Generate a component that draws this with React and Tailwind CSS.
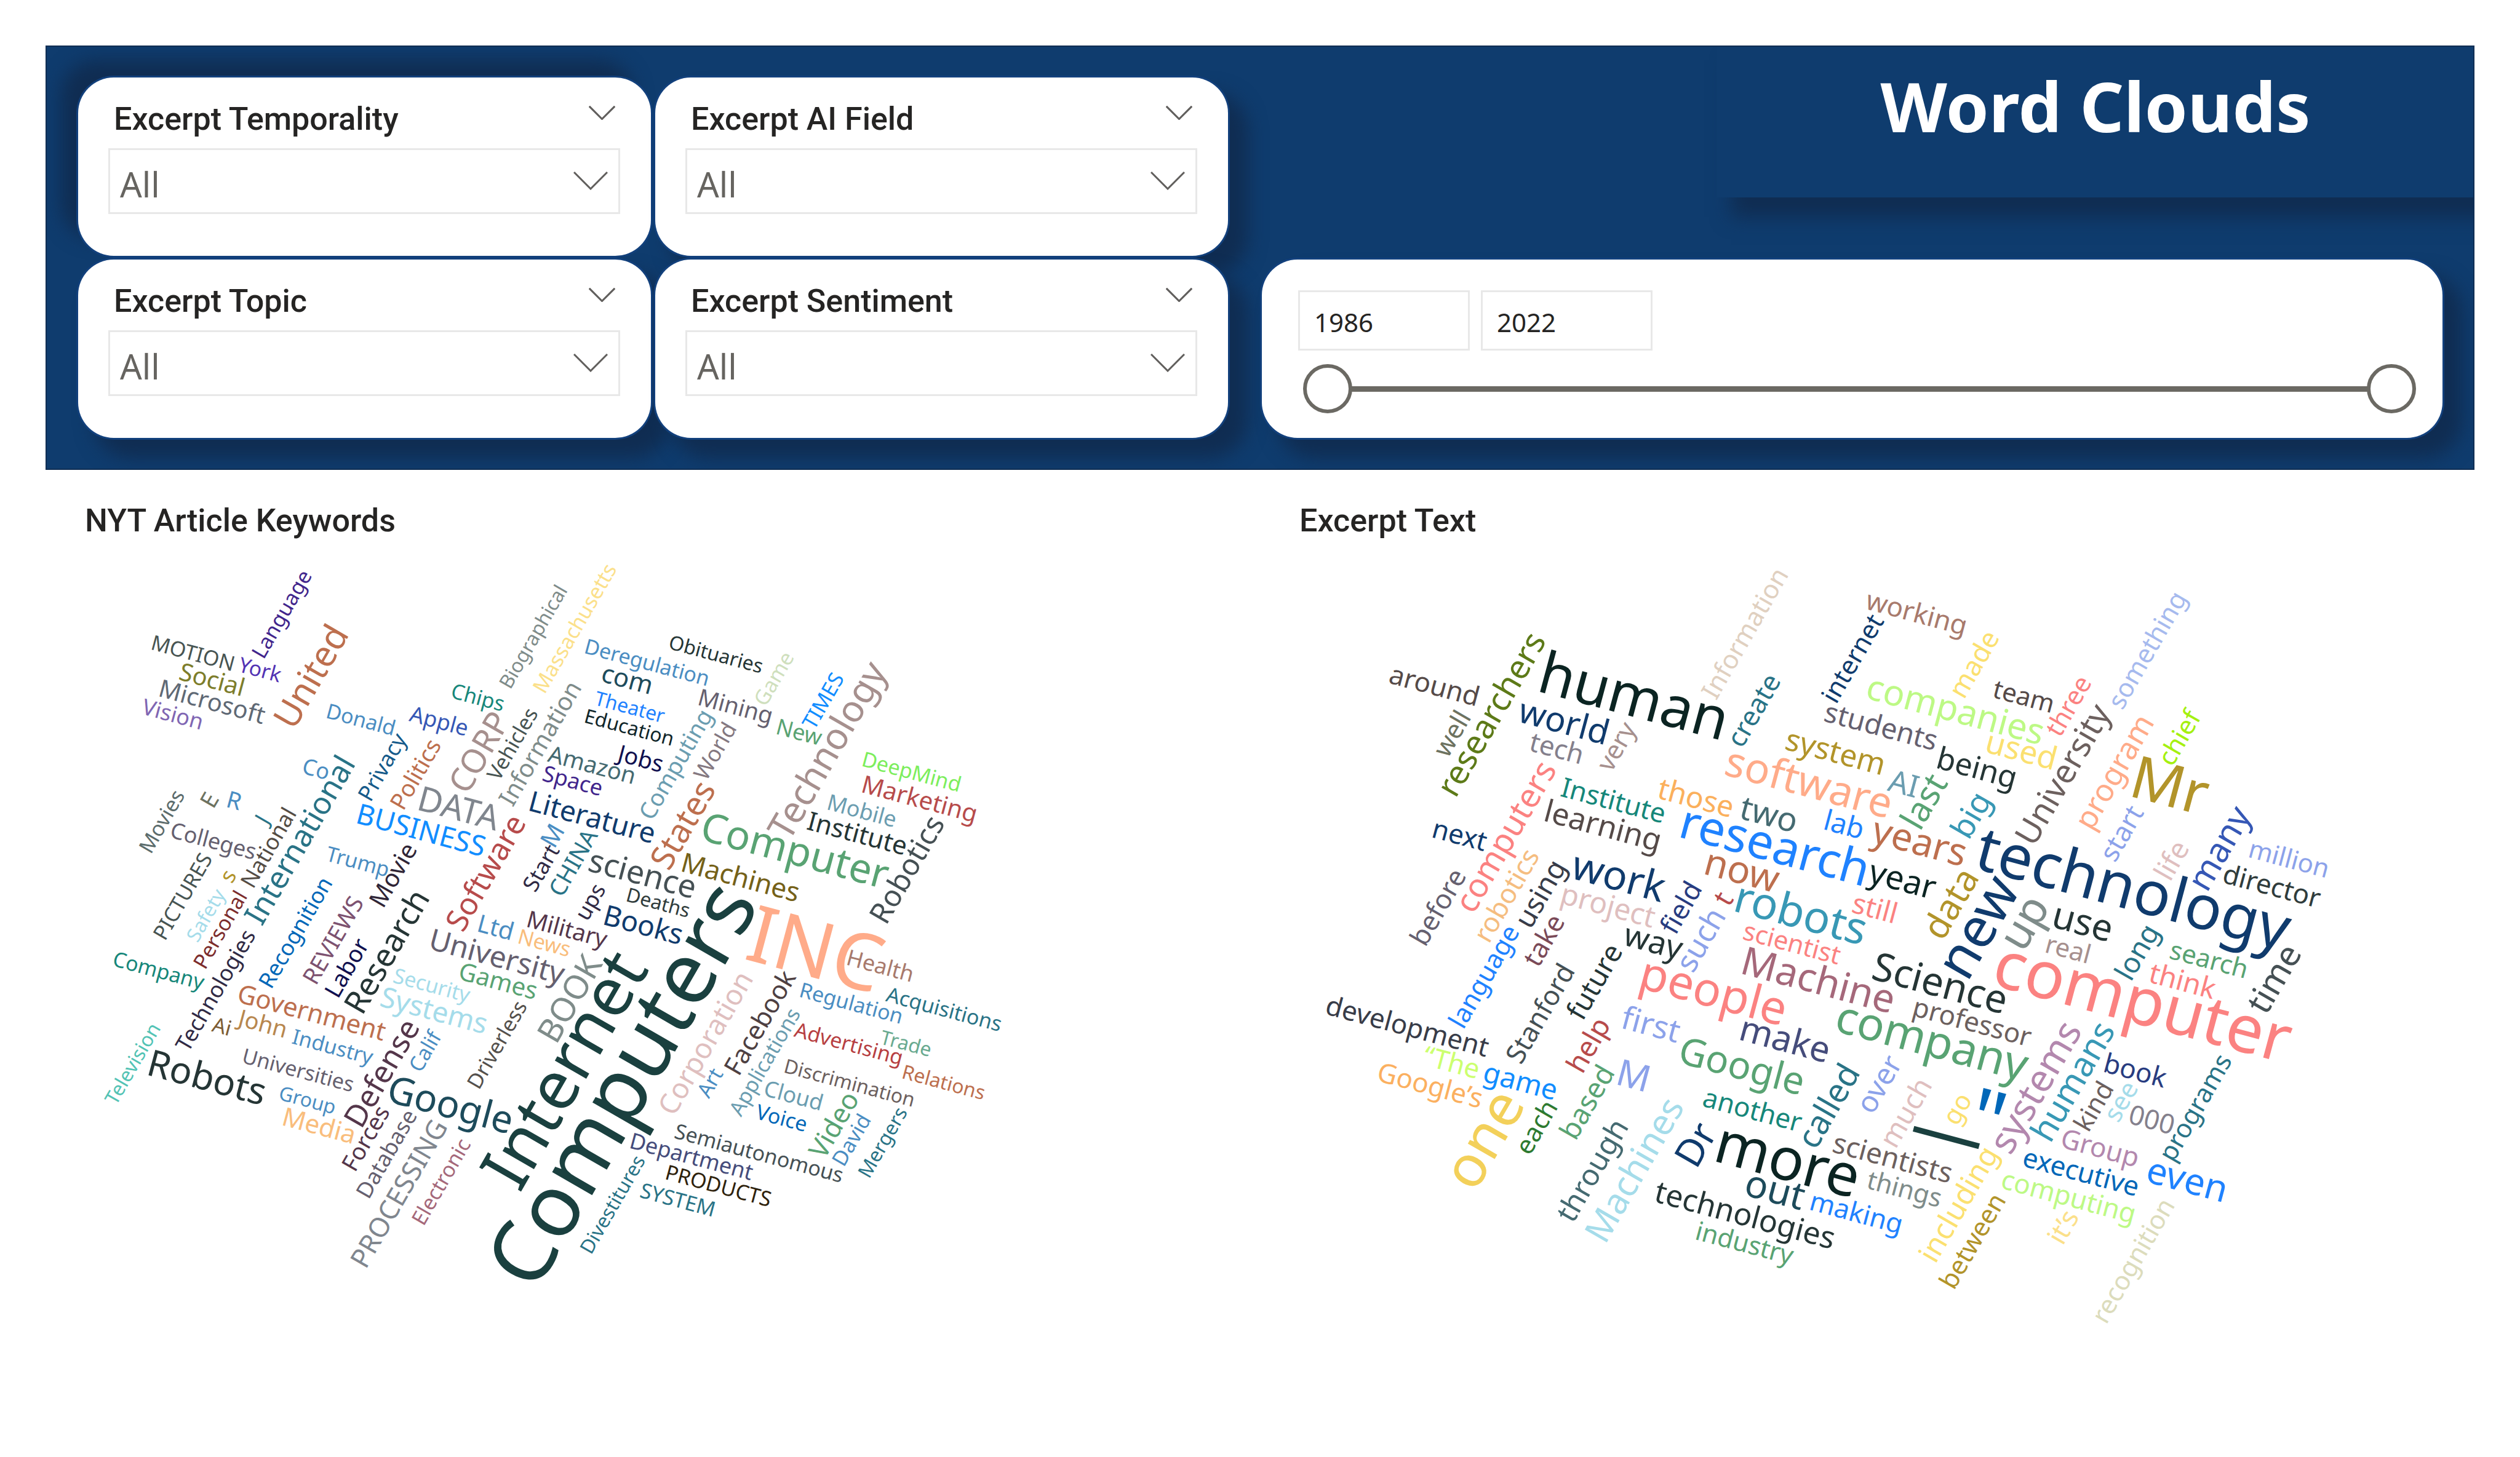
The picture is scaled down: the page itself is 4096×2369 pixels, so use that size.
import React, { useState } from 'react';

// Each word: [text, centre x, centre y, font size, colour, direction]
// direction: 'd' runs down to the right, 'u' runs up to the right
const keywordCloud = [
  ['MOTION', 240, 161, 34, '#475452', 'd'],
  ['York', 349, 188, 34, '#5233b4', 'd'],
  ['Social', 271, 204, 40, '#7d7d2b', 'd'],
  ['Microsoft', 271, 240, 40, '#5f6975', 'd'],
  ['Vision', 207, 261, 36, '#8066b3', 'd'],
  ['Donald', 513, 269, 34, '#4a8dc2', 'd'],
  ['Apple', 640, 272, 36, '#3557b5', 'd'],
  ['Co', 440, 350, 36, '#4a8dc2', 'd'],
  ['R', 307, 400, 38, '#4a8dc2', 'd'],
  ['Trump', 508, 500, 34, '#4a8dc2', 'd'],
  ['Colleges', 273, 467, 36, '#65606f', 'd'],
  ['Language', 383, 98, 34, '#41258c', 'u'],
  ['United', 430, 199, 58, '#bd6f4e', 'u'],
  ['Privacy', 547, 347, 36, '#155a8a', 'u'],
  ['Politics', 600, 358, 38, '#bd6f4e', 'u'],
  ['International', 412, 465, 50, '#297386', 'u'],
  ['E', 265, 400, 38, '#6d7260', 'u'],
  ['Movies', 188, 435, 34, '#5c6c6c', 'u'],
  ['National', 362, 478, 36, '#544c44', 'u'],
  ['J', 352, 432, 36, '#297386', 'u'],
  ['s', 296, 524, 36, '#b2942a', 'u'],
  ['Movie', 564, 522, 40, '#2f2536', 'u'],
  ['PICTURES', 222, 557, 34, '#475452', 'u'],
  ['Safety', 260, 588, 32, '#a5dcea', 'u'],
  ['Personal', 283, 611, 34, '#7c2c2c', 'u'],
  ['Technologies', 276, 710, 36, '#302a44', 'u'],
  ['Recognition', 406, 616, 36, '#0067b8', 'u'],
  ['REVIEWS', 466, 628, 38, '#7d5270', 'u'],
  ['Labor', 488, 673, 38, '#10104f', 'u'],
  ['Research', 553, 646, 52, '#253535', 'u'],
  ['Company', 184, 677, 34, '#16877a', 'd'],
  ['Television', 141, 829, 32, '#53c3b5', 'u'],
  ['Robots', 263, 850, 60, '#253535', 'd'],
  ['Ai', 287, 768, 34, '#7c5c33', 'd'],
  ['John', 354, 763, 38, '#b8874e', 'd'],
  ['Government', 433, 745, 42, '#bd6f4e', 'd'],
  ['Industry', 467, 801, 34, '#4a8dc2', 'd'],
  ['Universities', 411, 839, 34, '#65606f', 'd'],
  ['Group', 426, 888, 32, '#4a8dc2', 'd'],
  ['Media', 445, 929, 42, '#f9bd7c', 'd'],
  ['Defense', 545, 844, 50, '#54364a', 'u'],
  ['Calif', 616, 809, 34, '#4a8dc2', 'u'],
  ['Forces', 519, 950, 38, '#54364a', 'u'],
  ['Database', 554, 976, 36, '#65606f', 'u'],
  ['PROCESSING', 573, 1040, 44, '#80868e', 'u'],
  ['Electronic', 642, 1021, 34, '#a5687a', 'u'],
  ['Systems', 632, 741, 46, '#a5dcea', 'd'],
  ['Security', 628, 701, 34, '#a5dcea', 'd'],
  ['Google', 659, 894, 62, '#1d4b5b', 'd'],
  ['University', 734, 654, 48, '#65606f', 'd'],
  ['Games', 736, 694, 40, '#59a373', 'd'],
  ['Ltd', 732, 607, 40, '#4a8dc2', 'd'],
  ['News', 811, 632, 34, '#f9bd7c', 'd'],
  ['Military', 848, 609, 38, '#54364a', 'd'],
  ['Software', 714, 518, 50, '#b74b4b', 'u'],
  ['DATA', 672, 412, 56, '#80868e', 'd'],
  ['CORP', 703, 322, 54, '#a6908e', 'u'],
  ['Chips', 703, 233, 34, '#16877a', 'd'],
  ['BUSINESS', 611, 448, 46, '#118dff', 'd'],
  ['Vehicles', 758, 309, 34, '#475452', 'u'],
  ['Information', 803, 308, 40, '#7f8c8a', 'u'],
  ['Biographical', 792, 135, 32, '#7f8c8a', 'u'],
  ['Massachusetts', 859, 121, 34, '#fbe08a', 'u'],
  ['Deregulation', 978, 176, 34, '#4a8dc2', 'd'],
  ['com', 946, 203, 42, '#1d4b5b', 'd'],
  ['Theater', 950, 249, 32, '#1f82ff', 'd'],
  ['Education', 949, 282, 32, '#10262a', 'd'],
  ['Amazon', 889, 342, 38, '#456a71', 'd'],
  ['Jobs', 968, 332, 38, '#10104f', 'd'],
  ['Space', 857, 369, 36, '#41258c', 'd'],
  ['Literature', 889, 427, 46, '#103b6d', 'd'],
  ['Computing', 1023, 342, 38, '#6b9db0', 'u'],
  ['World', 1088, 321, 36, '#847880', 'u'],
  ['States', 1034, 440, 54, '#bd6f4e', 'u'],
  ['Computer', 1219, 480, 66, '#59a373', 'd'],
  ['M', 823, 458, 40, '#4a8dc2', 'u'],
  ['Start', 805, 511, 36, '#302a44', 'u'],
  ['CHINA', 856, 502, 38, '#297386', 'u'],
  ['science', 971, 519, 52, '#455054', 'd'],
  ['Machines', 1130, 525, 44, '#756118', 'd'],
  ['ups', 885, 566, 36, '#302a44', 'u'],
  ['Deaths', 996, 567, 32, '#303c3c', 'd'],
  ['Books', 972, 602, 46, '#103b6d', 'd'],
  ['Computers', 932, 860, 140, '#1a403f', 'u'],
  ['Internet', 839, 837, 110, '#1a403f', 'u'],
  ['INC', 1253, 640, 128, '#ffab89', 'd'],
  ['BOOK', 850, 723, 54, '#7f8c8a', 'u'],
  ['Driverless', 733, 798, 34, '#54504c', 'u'],
  ['Corporation', 1071, 795, 46, '#dfbfbf', 'u'],
  ['Facebook', 1160, 762, 42, '#4e4042', 'u'],
  ['Applications', 1168, 826, 34, '#6b9db0', 'u'],
  ['Art', 1079, 860, 34, '#4a8dc2', 'u'],
  ['Regulation', 1310, 730, 34, '#4a8dc2', 'd'],
  ['Health', 1357, 670, 36, '#a87a6c', 'd'],
  ['Acquisitions', 1461, 740, 34, '#297386', 'd'],
  ['Trade', 1399, 796, 32, '#69aa90', 'd'],
  ['Advertising', 1306, 796, 34, '#b73f42', 'd'],
  ['Relations', 1460, 859, 32, '#bd6f4e', 'd'],
  ['Discrimination', 1307, 860, 32, '#6c605e', 'd'],
  ['Cloud', 1216, 881, 36, '#6b9db0', 'd'],
  ['Voice', 1197, 917, 34, '#0067b8', 'd'],
  ['Semiautonomous', 1160, 974, 34, '#455054', 'd'],
  ['Department', 1050, 980, 36, '#454c7b', 'd'],
  ['PRODUCTS', 1094, 1027, 34, '#2e220c', 'd'],
  ['SYSTEM', 1028, 1050, 34, '#297386', 'd'],
  ['Divestitures', 921, 1058, 32, '#297386', 'u'],
  ['Video', 1280, 928, 44, '#59a373', 'u'],
  ['David', 1309, 953, 34, '#4a8dc2', 'u'],
  ['Mergers', 1360, 957, 32, '#297386', 'u'],
  ['Technology', 1269, 319, 60, '#a6908e', 'u'],
  ['TIMES', 1263, 239, 34, '#118dff', 'u'],
  ['Game', 1183, 203, 34, '#cfdfbd', 'u'],
  ['New', 1225, 290, 36, '#59a373', 'd'],
  ['Mining', 1122, 247, 38, '#65606f', 'd'],
  ['Obituaries', 1090, 163, 32, '#253535', 'd'],
  ['DeepMind', 1408, 354, 34, '#7cee5c', 'd'],
  ['Marketing', 1421, 398, 40, '#b74b4b', 'd'],
  ['Mobile', 1327, 418, 36, '#6b9db0', 'd'],
  ['Institute', 1320, 454, 42, '#253535', 'd'],
  ['Robotics', 1399, 513, 48, '#455054', 'u'],
];

const excerptCloud = [
  ['around', 284, 213, 44, '#554a48', 'd'],
  ['researchers', 374, 260, 54, '#5d7a18', 'u'],
  ['well', 311, 292, 42, '#6d7260', 'u'],
  ['world', 495, 271, 56, '#103b6d', 'd'],
  ['tech', 483, 315, 44, '#84808c', 'd'],
  ['very', 578, 313, 42, '#a6908e', 'u'],
  ['human', 609, 229, 94, '#0b2422', 'd'],
  ['Information', 787, 129, 42, '#e0d0c0', 'u'],
  ['create', 801, 254, 44, '#297386', 'u'],
  ['Institute', 575, 400, 44, '#16877a', 'd'],
  ['learning', 558, 441, 50, '#554a48', 'd'],
  ['those', 709, 396, 48, '#fbb05c', 'd'],
  ['two', 828, 422, 54, '#456a71', 'd'],
  ['next', 325, 456, 44, '#103b6d', 'd'],
  ['computers', 397, 459, 54, '#fb8281', 'u'],
  ['before', 288, 574, 44, '#65606f', 'u'],
  ['robotics', 399, 555, 44, '#f5bd80', 'u'],
  ['using', 454, 552, 46, '#383c48', 'u'],
  ['work', 584, 522, 66, '#103b6d', 'd'],
  ['project', 566, 571, 48, '#dfbfbf', 'd'],
  ['field', 683, 575, 44, '#283c80', 'u'],
  ['such', 715, 627, 50, '#8ca2ea', 'u'],
  ['t', 751, 560, 46, '#b74b4b', 'u'],
  ['way', 640, 629, 52, '#253535', 'd'],
  ['research', 838, 472, 78, '#1f82ff', 'd'],
  ['robots', 880, 582, 72, '#3898b5', 'd'],
  ['now', 784, 513, 62, '#bd6f4e', 'd'],
  ['software', 893, 370, 68, '#ffab89', 'd'],
  ['working', 1068, 95, 44, '#a87a6c', 'd'],
  ['internet', 962, 170, 42, '#103b6d', 'u'],
  ['companies', 1131, 252, 58, '#bdf985', 'd'],
  ['made', 1159, 179, 44, '#fbe070', 'u'],
  ['team', 1242, 231, 42, '#554a48', 'd'],
  ['three', 1313, 247, 42, '#fb8281', 'u'],
  ['students', 1010, 279, 46, '#65606f', 'd'],
  ['system', 936, 321, 50, '#b2942a', 'd'],
  ['used', 1238, 318, 52, '#fbe070', 'd'],
  ['being', 1166, 347, 50, '#253535', 'd'],
  ['AI', 1047, 373, 50, '#6b9db0', 'd'],
  ['last', 1077, 402, 56, '#59a373', 'u'],
  ['University', 1303, 358, 54, '#6c605e', 'u'],
  ['something', 1441, 156, 42, '#a6baee', 'u'],
  ['chief', 1493, 299, 42, '#a5f010', 'u'],
  ['program', 1387, 354, 50, '#ffab89', 'u'],
  ['Mr', 1480, 374, 96, '#b2942a', 'd'],
  ['big', 1154, 424, 52, '#3898b5', 'u'],
  ['lab', 950, 439, 46, '#1f82ff', 'd'],
  ['years', 1073, 466, 62, '#bd6f4e', 'd'],
  ['year', 1045, 528, 54, '#0b2422', 'd'],
  ['technology', 1421, 541, 100, '#103b6d', 'd'],
  ['many', 1557, 478, 56, '#3557b5', 'u'],
  ['million', 1673, 495, 42, '#8ca2ea', 'd'],
  ['director', 1645, 539, 44, '#303c3c', 'd'],
  ['life', 1480, 498, 46, '#dfbfbf', 'u'],
  ['start', 1399, 454, 44, '#8ca2ea', 'u'],
  ['data', 1121, 568, 58, '#b2942a', 'u'],
  ['new', 1163, 605, 90, '#103b6d', 'u'],
  ['up', 1239, 598, 72, '#7f8c8a', 'u'],
  ['use', 1338, 597, 60, '#253535', 'd'],
  ['real', 1314, 642, 42, '#a6908e', 'd'],
  ['still', 1000, 575, 46, '#fb8281', 'd'],
  ['scientist', 865, 632, 42, '#fb8281', 'd'],
  ['Machine', 908, 692, 64, '#a5687a', 'd'],
  ['Science', 1106, 697, 64, '#253535', 'd'],
  ['professor', 1158, 760, 44, '#6c605e', 'd'],
  ['computer', 1436, 725, 108, '#fb8281', 'd'],
  ['company', 1093, 790, 74, '#59a373', 'd'],
  ['search', 1543, 659, 42, '#59a373', 'd'],
  ['think', 1500, 693, 46, '#fb8281', 'd'],
  ['long', 1424, 647, 46, '#297386', 'u'],
  ['time', 1646, 690, 56, '#455054', 'u'],
  ['book', 1423, 839, 44, '#283c80', 'd'],
  ['programs', 1519, 900, 42, '#297386', 'u'],
  ['kind', 1354, 898, 42, '#6c605e', 'u'],
  ['see', 1398, 890, 42, '#a5dcea', 'u'],
  ['000', 1450, 919, 44, '#84808c', 'd'],
  ['Group', 1366, 965, 44, '#b388ae', 'd'],
  ['humans', 1319, 857, 56, '#3898b5', 'u'],
  ['systems', 1258, 866, 62, '#b388ae', 'u'],
  ['even', 1508, 1016, 60, '#1f82ff', 'd'],
  ['executive', 1335, 1004, 44, '#0067b8', 'd'],
  ['computing', 1315, 1044, 44, '#bdf985', 'd'],
  ['it’s', 1304, 1094, 44, '#fbe08a', 'u'],
  ['recognition', 1418, 1149, 42, '#dcdcbc', 'u'],
  ['between', 1157, 1117, 42, '#b2942a', 'u'],
  ['including', 1134, 1057, 48, '#fbe070', 'u'],
  ['—', 1119, 936, 120, '#1a403f', 'd'],
  ['"', 1183, 917, 138, '#0067b8', 'd'],
  ['M', 608, 847, 60, '#8ca2ea', 'd'],
  ['first', 636, 764, 52, '#8ca2ea', 'd'],
  ['people', 738, 709, 76, '#fb8281', 'd'],
  ['make', 854, 788, 58, '#454c7b', 'd'],
  ['Google', 784, 831, 62, '#59a373', 'd'],
  ['another', 801, 903, 44, '#16877a', 'd'],
  ['Dr', 706, 960, 62, '#103b6d', 'u'],
  ['more', 859, 982, 96, '#0b2422', 'd'],
  ['out', 838, 1032, 62, '#1d4b5b', 'd'],
  ['technologies', 789, 1074, 50, '#253535', 'd'],
  ['industry', 788, 1120, 42, '#59a373', 'd'],
  ['making', 970, 1070, 44, '#1f82ff', 'd'],
  ['things', 1048, 1032, 42, '#7f8c8a', 'd'],
  ['scientists', 1029, 981, 46, '#6c605e', 'd'],
  ['called', 922, 897, 54, '#297386', 'u'],
  ['over', 1005, 862, 48, '#8ca2ea', 'u'],
  ['much', 1048, 908, 46, '#dfbfbf', 'u'],
  ['go', 1132, 902, 42, '#fbe070', 'u'],
  ['help', 532, 798, 46, '#b74b4b', 'u'],
  ['based', 530, 891, 46, '#59a373', 'u'],
  ['future', 542, 695, 46, '#253535', 'u'],
  ['Stanford', 454, 747, 44, '#455054', 'u'],
  ['take', 460, 628, 44, '#7a4a58', 'u'],
  ['language', 363, 687, 42, '#1f82ff', 'u'],
  ['development', 240, 767, 44, '#383c48', 'd'],
  ['“The', 312, 826, 44, '#ccff70', 'd'],
  ['Google’s', 277, 863, 44, '#fbb060', 'd'],
  ['game', 424, 856, 46, '#118dff', 'd'],
  ['one', 360, 950, 94, '#f3d05a', 'u'],
  ['each', 448, 932, 42, '#2e7a30', 'u'],
  ['through', 539, 1002, 48, '#456a71', 'u'],
  ['Machines', 607, 1001, 58, '#a5dcea', 'u'],
];

const slicers = [
  { id: 'temporality', label: 'Excerpt Temporality', shadow: 'shadow-[-28px_-28px_30px_0px_#102d52]' },
  { id: 'ai-field', label: 'Excerpt AI Field', shadow: 'shadow-[28px_28px_30px_4px_#102d52]' },
  { id: 'topic', label: 'Excerpt Topic', shadow: 'shadow-[28px_28px_30px_4px_#102d52]' },
  { id: 'sentiment', label: 'Excerpt Sentiment', shadow: 'shadow-[28px_28px_30px_4px_#102d52]' },
];

function Chevron({ className, stroke = 3 }) {
  return (
    <svg className={className} viewBox="0 0 56 30" fill="none" stroke="#605e5c" strokeWidth={stroke} aria-hidden="true">
      <path d="M1 1 L28 28 L55 1" />
    </svg>
  );
}

function Slicer({ id, label, shadow }) {
  return (
    <section className={`rounded-[58px] bg-white ring-[3px] ring-[#12407c] pb-[68px] ${shadow}`}>
      <div className="flex h-[115px] items-center justify-between pl-[58px] pr-[58px]">
        <label htmlFor={id} className="pt-5 font-['Roboto',sans-serif] text-[52px] font-medium leading-[52px] text-[#252423]">
          {label}
        </label>
        <button type="button" aria-label={`${label} options`}>
          <Chevron className="h-[23px] w-[43px]" stroke={4} />
        </button>
      </div>
      <div className="relative ml-[49px] mr-[50px] h-[107px]">
        <select
          id={id}
          className="h-full w-full appearance-none border-[3px] border-[#e8e8e8] bg-white pl-[16px] pt-[8px] text-[56px] leading-[72px] text-[#666460]"
        >
          <option>All</option>
        </select>
        <Chevron className="pointer-events-none absolute right-[20px] top-[38px] h-[30px] w-[56px]" />
      </div>
    </section>
  );
}

const yearBox = 'h-[98px] w-[279px] border-[3px] border-[#e8e8e8] bg-white pl-[23px] pt-1 text-[42px] text-[#252423]';
const rangeClass =
  'pointer-events-none absolute inset-0 h-full w-full appearance-none bg-transparent [&::-webkit-slider-thumb]:pointer-events-auto [&::-webkit-slider-thumb]:size-[80px] [&::-webkit-slider-thumb]:appearance-none [&::-webkit-slider-thumb]:rounded-full [&::-webkit-slider-thumb]:border-[6px] [&::-webkit-slider-thumb]:border-solid [&::-webkit-slider-thumb]:border-[#6b6963] [&::-webkit-slider-thumb]:bg-white';

function YearRange() {
  const [from, setFrom] = useState(1986);
  const [to, setTo] = useState(2022);
  return (
    <section className="mr-[52px] mt-auto h-[290px] rounded-[58px] bg-white pl-[59px] pr-[43px] pt-[50px] shadow-[28px_28px_30px_4px_#102d52] ring-[3px] ring-[#12407c]">
      <div className="flex gap-[18px]">
        <input aria-label="From year" value={from} onChange={(e) => setFrom(e.target.value)} className={yearBox} />
        <input aria-label="To year" value={to} onChange={(e) => setTo(e.target.value)} className={yearBox} />
      </div>
      <div className="relative ml-[8px] mt-[22px] flex h-[80px] items-center px-[40px]">
        <div className="h-[9px] w-full bg-[#6b6963]" />
        <input type="range" aria-label="First year" min="1986" max="2022" value={from} onChange={(e) => setFrom(e.target.value)} className={rangeClass} />
        <input type="range" aria-label="Last year" min="1986" max="2022" value={to} onChange={(e) => setTo(e.target.value)} className={rangeClass} />
      </div>
    </section>
  );
}

function WordCloud({ title, words }) {
  return (
    <section>
      <h2 className="pl-[64px] pt-[57px] font-['Roboto',sans-serif] text-[52px] font-medium leading-[52px] text-[#252423]">{title}</h2>
      <div className="relative mt-[27px] h-[1360px]">
        {words.map(([text, x, y, size, color, dir]) => (
          <span
            key={text}
            className={`absolute -translate-x-1/2 -translate-y-1/2 whitespace-nowrap leading-none ${dir === 'u' ? '-rotate-60' : 'rotate-15'}`}
            style={{ left: x, top: y, fontSize: size, color }}
          >
            {text}
          </span>
        ))}
      </div>
    </section>
  );
}

export default function App() {
  return (
    <main className="min-h-screen bg-white px-[74px] pt-[74px] font-['Noto_Sans',sans-serif]">
      <header className="grid grid-cols-[1922fr_1971fr] gap-[55px] overflow-hidden bg-[#0f3c6e] outline-2 -outline-offset-2 outline-[#0f2d52]">
        <div className="grid grid-cols-2 gap-x-[7px] gap-y-[6px] pb-[52px] pl-[53px] pt-[52px]">
          {slicers.map((s) => (
            <Slicer key={s.id} {...s} />
          ))}
        </div>
        <div className="flex flex-col pb-[52px]">
          <div className="h-[247px] w-[62.5%] self-end bg-[#0f3c6e] pt-[34px] text-center shadow-[28px_28px_30px_4px_#102d52]">
            <h1 className="text-[112px] font-bold leading-[128px] text-white">Word Clouds</h1>
          </div>
          <YearRange />
        </div>
      </header>
      <div className="grid grid-cols-2">
        <WordCloud title="NYT Article Keywords" words={keywordCloud} />
        <WordCloud title="Excerpt Text" words={excerptCloud} />
      </div>
    </main>
  );
}
